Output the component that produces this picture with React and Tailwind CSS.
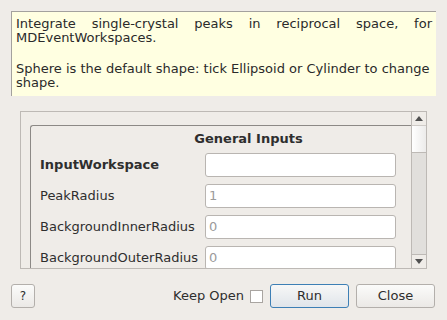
import React from 'react';

const font = { fontFamily: '"DejaVu Sans", "Liberation Sans", sans-serif' };

const UpArrow = () => (
    <svg width="8" height="5" viewBox="0 0 8 5">
        <path d="M0 5 L4 0 L8 5 Z" fill="#505050" />
    </svg>
);

const DownArrow = () => (
    <svg width="8" height="5" viewBox="0 0 8 5">
        <path d="M0 0 L4 5 L8 0 Z" fill="#505050" />
    </svg>
);

const Row = ({ label, value, bold = false }) => (
    <div className="flex items-center h-[24px]">
        <div className={`w-[165px] text-[13px] text-[#2e2e2e] ${bold ? 'font-bold' : ''}`}>{label}</div>
        <div className="w-[191px] h-[24px] bg-white border border-[#b9b5b1] rounded-[3px] flex items-center pl-[3px] text-[13px] text-[#9b9b9b]">
            {value}
        </div>
    </div>
);

const App = () => {
    return (
        <div className="w-[447px] h-[320px] bg-[#efece8] overflow-hidden flex flex-col" style={font}>
            {/* Description */}
            <div className="mt-[11px] ml-[11px] w-[425px] h-[85px] bg-[#ffffe1] border-t border-l border-[#a3a19e] pl-[4px] pr-[4px] pt-[5px] text-[13px] leading-[14px] text-[#2a2a2a]">
                <p className="text-justify" style={{ textAlignLast: 'left' }}>
                    Integrate single-crystal peaks in reciprocal space, for MDEventWorkspaces.
                </p>
                <p className="mt-[17px]">
                    Sphere is the default shape: tick Ellipsoid or Cylinder to change shape.
                </p>
            </div>

            {/* Scroll area */}
            <div className="mt-[15px] ml-[20px] w-[407px] h-[158px] border border-[#bdb9b5] flex">
                <div className="flex-1 overflow-hidden pl-[9px] pt-[13px]">
                    <div className="w-[427px] h-[200px] border-l border-t border-[#8c8986] rounded-tl-[3px] pl-[9px] pt-[5px]">
                        <div className="text-center font-bold text-[13px] leading-[15px] text-[#2e2e2e]">General Inputs</div>
                        <div className="mt-[7px] flex flex-col gap-[7px]">
                            <Row label="InputWorkspace" value="" bold />
                            <Row label="PeakRadius" value="1" />
                            <Row label="BackgroundInnerRadius" value="0" />
                            <Row label="BackgroundOuterRadius" value="0" />
                        </div>
                    </div>
                </div>
                {/* Scrollbar */}
                <div className="w-[15px] border-l border-[#bdb9b5] flex flex-col">
                    <div className="h-[14px] flex items-center justify-center border-b border-[#cfcbc7]">
                        <UpArrow />
                    </div>
                    <div className="h-[27px] bg-gradient-to-r from-white to-[#ecebea] border-b border-[#bdb9b5]"></div>
                    <div className="flex-1 bg-[#e1dfdc]"></div>
                    <div className="h-[14px] flex items-center justify-center border-t border-[#bdb9b5]">
                        <DownArrow />
                    </div>
                </div>
            </div>

            {/* Bottom bar */}
            <div className="mt-[15px] flex items-center pl-[11px] pr-[12px]">
                <button className="w-[24px] h-[24px] border border-[#b3afab] rounded-[3px] bg-gradient-to-b from-[#fbfbfa] to-[#ebe9e6] text-[12px] text-[#2e2e2e]">?</button>
                <div className="flex-1"></div>
                <span className="text-[13px] text-[#2e2e2e]">Keep Open</span>
                <div className="ml-[6px] w-[13px] h-[13px] bg-white border border-[#a9a5a1]"></div>
                <button className="ml-[7px] w-[79px] h-[24px] border border-[#3d7fb5] rounded-[3px] bg-gradient-to-b from-[#f7f7f7] to-[#e0e5ea] text-[13px] text-[#2e2e2e]">Run</button>
                <button className="ml-[7px] w-[79px] h-[24px] border border-[#b3afab] rounded-[3px] bg-gradient-to-b from-[#fbfbfa] to-[#ebe9e6] text-[13px] text-[#2e2e2e]">Close</button>
            </div>
        </div>
    );
};

export default App;
